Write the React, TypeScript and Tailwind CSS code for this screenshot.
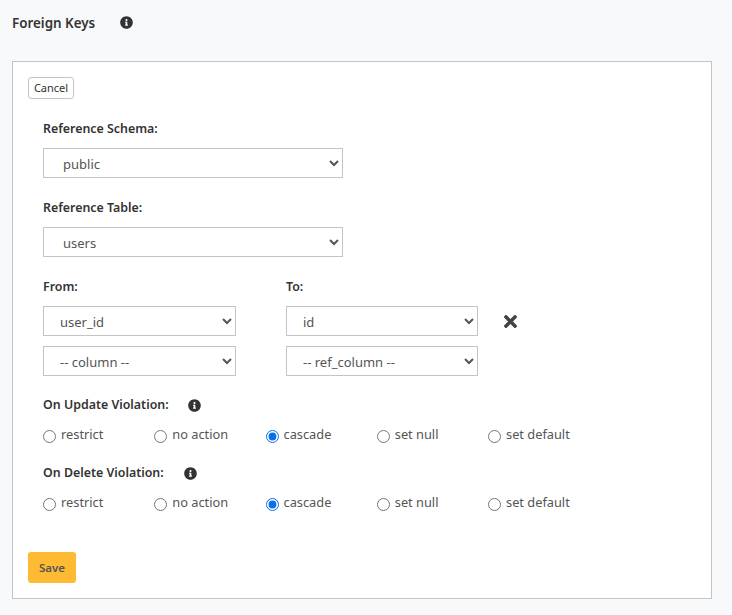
import React from "react";

const font = { fontFamily: '"Noto Sans", sans-serif' };

function Info({ className = "" }: { className?: string }) {
  return (
    <svg viewBox="0 0 512 512" className={`w-[13px] h-[13px] fill-[#333] ${className}`}>
      <path d="M256 8C119 8 8 119 8 256s111 248 248 248 248-111 248-248S393 8 256 8zm0 110c23 0 42 19 42 42s-19 42-42 42-42-19-42-42 19-42 42-42zm56 254c0 7-5 12-12 12h-88c-7 0-12-5-12-12v-24c0-7 5-12 12-12h12v-64h-12c-7 0-12-5-12-12v-24c0-7 5-12 12-12h64c7 0 12 5 12 12v100h12c7 0 12 5 12 12v24z" />
    </svg>
  );
}

function Sel({ value, wide, first }: { value: string; wide?: boolean; first?: boolean }) {
  return (
    <select
      defaultValue={value}
      className={`block h-[30px] pt-[2px] bg-white border border-[#c4c4c4] text-[13px] text-[#555] ${wide ? "w-[300px] pl-[15px]" : first ? "w-[193px] pl-[12px]" : "w-[192px] pl-[12px]"}`}
    >
      <option>{value}</option>
    </select>
  );
}

function Radios({ name }: { name: string }) {
  const opts = ["restrict", "no action", "cascade", "set null", "set default"];
  return (
    <div className="flex mt-[10px] h-[20px]">
      {opts.map((o) => (
        <label key={o} className="w-[111.25px] flex items-start text-[12.8px] leading-[18px] text-[#555] shrink-0">
          <input
            type="radio"
            name={name}
            defaultChecked={o === "cascade"}
            className="w-[13px] h-[13px] mt-[5px] mr-[5px] ml-0 accent-[#0b6fe8]"
          />
          {o}
        </label>
      ))}
    </div>
  );
}

const label = "text-[12.4px] leading-[20px] font-semibold text-[#333]";

export default function App() {
  return (
    <div className="w-[732px] h-[615px] bg-[#f8f9fb] overflow-hidden pt-[12px] px-[12px]" style={font}>
      <div className="flex items-center h-[20px]">
        <span className="text-[13.4px] pt-[2px] font-semibold text-[#333] w-[108px]">Foreign Keys</span>
        <Info />
      </div>
      <div className="mt-[29px] w-[700px] h-[538px] bg-white border border-[#c4c4c4] pt-[15px] px-[15px]">
        <button className="block h-[22px] w-[46px] border border-[#c4c4c4] rounded-[3px] bg-white text-[11px] text-[#333]">
          Cancel
        </button>
        <div className="pl-[15px]">
          <div className={`mt-[20px] ${label}`}>Reference Schema:</div>
          <div className="mt-[9px]"><Sel wide value="public" /></div>
          <div className={`mt-[20px] ${label}`}>Reference Table:</div>
          <div className="mt-[9px]"><Sel wide value="users" /></div>
          <div className={`mt-[20px] flex ${label}`}>
            <span className="w-[243px]">From:</span>
            <span>To:</span>
          </div>
          <div className="mt-[9px] flex items-center">
            <Sel first value="user_id" />
            <div className="ml-[50px]"><Sel value="id" /></div>
            <svg viewBox="0 0 352 512" className="w-[15px] h-[19px] ml-[25px] fill-[#444]">
              <path d="M242.72 256l100.07-100.07c12.28-12.28 12.28-32.19 0-44.48l-22.24-22.24c-12.28-12.28-32.19-12.28-44.48 0L176 189.28 75.93 89.21c-12.28-12.28-32.19-12.28-44.48 0L9.21 111.45c-12.28 12.28-12.28 32.19 0 44.48L109.28 256 9.21 356.07c-12.28 12.28-12.28 32.19 0 44.48l22.24 22.24c12.28 12.28 32.2 12.28 44.48 0L176 322.72l100.07 100.07c12.28 12.28 32.2 12.28 44.48 0l22.24-22.24c12.28-12.28 12.28-32.19 0-44.48L242.72 256z" />
            </svg>
          </div>
          <div className="mt-[10px] flex">
            <Sel first value="-- column --" />
            <div className="ml-[50px]"><Sel value="-- ref_column --" /></div>
          </div>
          <div className={`mt-[19px] flex items-center ${label}`}>
            <span className="w-[145px]">On Update Violation:</span>
            <Info className="w-[12px] h-[12px]" />
          </div>
          <Radios name="u" />
          <div className={`mt-[18px] flex items-center ${label}`}>
            <span className="w-[141px]">On Delete Violation:</span>
            <Info className="w-[12px] h-[12px]" />
          </div>
          <Radios name="d" />
        </div>
        <button className="block mt-[39px] w-[48px] h-[31px] rounded-[3px] bg-[#ffba33] text-[11.5px] font-semibold text-[#555]">
          Save
        </button>
      </div>
    </div>
  );
}
